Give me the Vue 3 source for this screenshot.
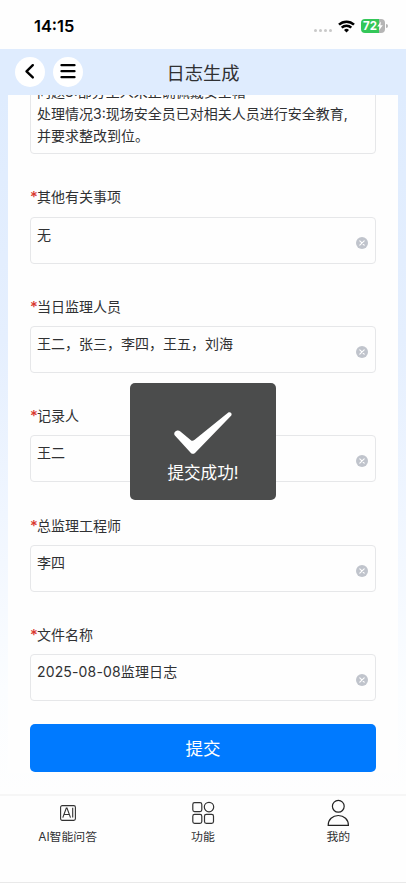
<script setup>
const fields = [
  { label: '其他有关事项', value: '无' },
  { label: '当日监理人员', value: '王二，张三，李四，王五，刘海' },
  { label: '记录人', value: '王二' },
  { label: '总监理工程师', value: '李四' },
  { label: '文件名称', value: '2025-08-08监理日志', spaced: true },
]
</script>

<template>
  <div class="screen">
    <div class="status">
      <span class="time">14:15</span>
      <div class="indicators">
        <span class="dots"><i /><i /><i /><i /></span>
        <svg class="wifi" width="17" height="13" viewBox="0 0 17 13">
          <path d="M8.5 12.6 6 9.9a3.6 3.6 0 0 1 5 0Z" fill="#000" />
          <path d="M3.7 7.7a6.9 6.9 0 0 1 9.6 0M1 4.7a10.8 10.8 0 0 1 15 0" fill="none" stroke="#000" stroke-width="2.5" />
        </svg>
        <div class="battery">
          <span>72</span>
          <svg width="6" height="10" viewBox="0 0 6 9"><path d="M4 0 0.2 5h2.3L2 9l3.8-5.2H3.4Z" fill="#fff" /></svg>
        </div>
        <i class="nub" />
      </div>
    </div>

    <header class="header">
      <div class="actions">
        <button class="round">
          <svg width="30" height="30" viewBox="0 0 30 30"><path d="M17.8 8.2 11.5 14.3 17.8 20.4" fill="none" stroke="#000" stroke-width="2.4" stroke-linecap="round" stroke-linejoin="round" /></svg>
        </button>
        <button class="round">
          <svg width="30" height="30" viewBox="0 0 30 30"><path d="M8.5 8.2h13M8.5 14.2h13M8.5 20.2h13" fill="none" stroke="#000" stroke-width="2.3" stroke-linecap="round" /></svg>
        </button>
      </div>
      <h1>日志生成</h1>
      <div class="side" />
    </header>

    <main class="content">
      <section class="card">
        <div class="box notes">
          <p>问题3:部分工人未正确佩戴安全帽</p>
          <p>处理情况3:现场安全员已对相关人员进行安全教育,</p>
          <p>并要求整改到位。</p>
        </div>
        <div v-for="f in fields" :key="f.label" class="field">
          <label><em>*</em>{{ f.label }}</label>
          <div class="box">
            <p :class="{ spaced: f.spaced }">{{ f.value }}</p>
            <svg class="clear" width="12" height="12" viewBox="0 0 12 12">
              <circle cx="6" cy="6" r="6" fill="#c0c4cc" />
              <path d="m3.8 3.8 4.4 4.4m0-4.4L3.8 8.2" stroke="#fff" stroke-width="1.1" stroke-linecap="round" />
            </svg>
          </div>
        </div>
        <button class="submit">提交</button>
      </section>
    </main>

    <nav class="tabs">
      <div class="tab">
        <svg width="28" height="28" viewBox="0 0 28 28" fill="none" stroke="#333" stroke-width="1.1">
          <rect x="6.6" y="6.6" width="14.8" height="14.8" rx="1.6" />
          <path d="m8.8 18.6 3.5-9.6h.7l3.5 9.6M10.1 15.5h5.1M18.7 8.8v9.8" />
        </svg>
        <span>AI智能问答</span>
      </div>
      <div class="tab">
        <svg width="28" height="28" viewBox="0 0 28 28" fill="none" stroke="#333" stroke-width="1.2">
          <rect x="3.8" y="3.6" width="9" height="9" rx="1.8" />
          <circle cx="20" cy="8.1" r="4.7" />
          <rect x="3.8" y="15.4" width="9" height="9" rx="1.8" />
          <rect x="15.5" y="15.4" width="9" height="9" rx="1.8" />
        </svg>
        <span>功能</span>
      </div>
      <div class="tab">
        <svg width="28" height="28" viewBox="0 0 28 28" fill="none" stroke="#222" stroke-width="1.2">
          <circle cx="14.3" cy="7.3" r="5.9" />
          <path d="M4.2 26.3c0-5.7 4.3-9.8 10.1-9.8s10.1 4.1 10.1 9.8Z" />
        </svg>
        <span>我的</span>
      </div>
    </nav>

    <div class="toast">
      <svg width="58" height="42" viewBox="0 0 58 42">
        <path d="M2.6 18.8C4 18.2 5.4 18.7 6.4 19.5L17.2 28.5Q18.7 29.3 20.3 28L54 .8C56-.6 58.5 1.4 57.3 3.4L21 41C19.5 42.2 18.1 42.1 16.9 41L.9 23.6C-.5 21.9.4 19.4 2.6 18.8Z" fill="#fff" />
      </svg>
      <span>提交成功!</span>
    </div>
  </div>
</template>

<style>
body { background: #fdfdfd; }
</style>

<style scoped>
* { box-sizing: border-box; }
.screen {
  position: relative;
  width: 406px;
  height: 883px;
  overflow: hidden;
  display: flex;
  flex-direction: column;
  background: #fefefe;
  color: #303133;
  font-family: Inter, "Noto Sans CJK SC", sans-serif;
}
p, h1 { margin: 0; font-weight: 400; }
button { border: 0; padding: 0; font-family: inherit; }
.status {
  height: 49px;
  flex: none;
  display: flex;
  justify-content: space-between;
  align-items: center;
  padding: 3px 18px 0 34px;
}
.time { color: #000; font-size: 16.4px; font-weight: 600; line-height: 20px; }
.indicators { display: flex; align-items: center; }
.dots { display: flex; gap: 2px; margin: 8px 6px 0 0; }
.dots i { width: 3px; height: 3px; border-radius: 50%; background: #c9c9c9; }
.wifi { margin-right: 6px; }
.battery {
  width: 24px;
  height: 14px;
  border-radius: 4px;
  display: flex;
  align-items: center;
  justify-content: center;
  background: linear-gradient(90deg, #34c759 73%, #b5b5b5 73%);
  color: #fff;
  font-size: 11.5px;
  font-weight: 700;
  line-height: 14px;
}
.nub { width: 2px; height: 4px; margin-left: 1px; border-radius: 0 2px 2px 0; background: #b5b5b5; }
.header {
  height: 46px;
  flex: none;
  display: flex;
  align-items: center;
  padding: 0 15px;
  background: #dfecfe;
}
.actions, .side { width: 100px; display: flex; gap: 8px; }
.round {
  width: 30px;
  height: 30px;
  border-radius: 50%;
  background: #fff;
  display: flex;
}
h1 { flex: 1; padding-top: 1px; text-align: center; font-size: 18.3px; line-height: 28px; }
.content {
  height: 699px;
  flex: none;
  overflow: hidden;
  padding: 0 8px;
  background: linear-gradient(180deg, #dfecfe 0, #e5effe 35%, #f0f6ff 60%, #fbfdff 85%, #fefefe 100%);
}
.card { height: 100%; padding: 0 22px; background: #fefefe; }
.box {
  height: 47px;
  padding: 7px 6px;
  display: flex;
  border: 1px solid #e6e7e9;
  border-radius: 4px;
  font-size: 14px;
  line-height: 22px;
  white-space: nowrap;
}
.box p { flex: 1; margin-top: -1px; }
.box .spaced { letter-spacing: 0.15px; }
.notes {
  height: 80px;
  margin-top: -21px;
  padding: 0 6px;
  flex-direction: column;
  justify-content: flex-end;
  padding-bottom: 6px;
}
.notes p { flex: none; margin: 0; }
.field { height: 109.4px; padding-top: 31.7px; }
.field label { display: flex; height: 22px; margin-bottom: 9px; font-size: 14px; line-height: 23px; }
.field:nth-child(2) label { line-height: 22px; }
em { width: 7px; color: #d9362f; font-style: normal; font-size: 15px; font-weight: 500; }
.clear { align-self: flex-end; margin: 0 1px 7px 0; flex: none; }
.submit {
  display: block;
  width: 100%;
  height: 48px;
  margin-top: 23px;
  border-radius: 5px;
  background: #007aff;
  color: #fff;
  font-size: 17.5px;
  line-height: 49px;
}
.tabs {
  flex: 1;
  display: grid;
  grid-template-columns: repeat(3, 1fr);
  border-top: 2px solid #f6f6f6;
  border-bottom: 1px solid #e9e9e9;
}
.tab { display: flex; flex-direction: column; align-items: center; padding-top: 3px; }
.tab span { margin-top: 2px; font-size: 11.9px; line-height: 16px; }
.toast {
  position: absolute;
  left: 130px;
  top: 383px;
  width: 146px;
  height: 117px;
  padding-top: 29px;
  border-radius: 5px;
  background: #4b4c4c;
  color: #fff;
  display: flex;
  flex-direction: column;
  align-items: center;
}
.toast span { margin-top: 7px; font-size: 16.6px; line-height: 24px; }
</style>
